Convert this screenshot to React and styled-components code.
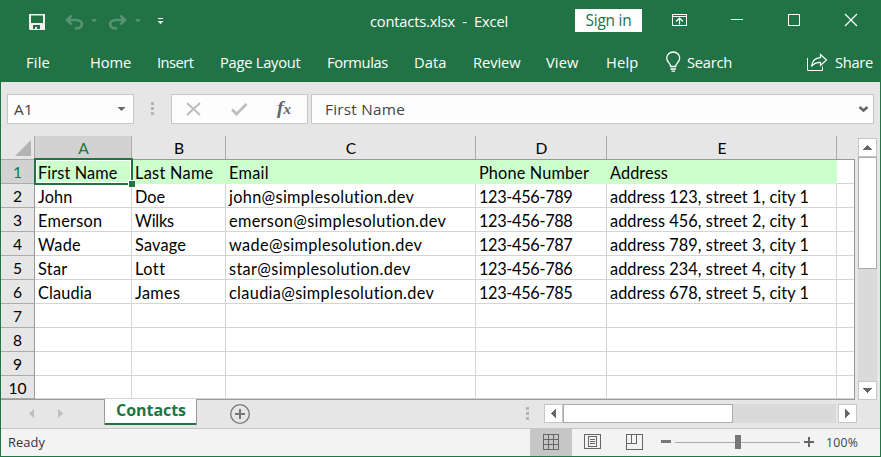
import React, { useLayoutEffect, useRef, useState } from "react";
import styled, { createGlobalStyle } from "styled-components";

const GREEN = "#217346";
const UI = '"Open Sans", "Noto Sans", sans-serif';
const CELL = 'Lato, "Open Sans", sans-serif';

const GlobalStyle = createGlobalStyle`
  * { box-sizing: border-box; }
  body { margin: 0; overflow: hidden; }
`;

/* Text tracked so that its advance equals a given width. */
const Tracked = styled.span`
  display: inline-block;
  white-space: pre;
`;

function FitText({ w, children }) {
  const ref = useRef(null);
  const [spacing, setSpacing] = useState(0);
  useLayoutEffect(() => {
    const natural = ref.current.getBoundingClientRect().width;
    setSpacing((w - natural) / children.length);
  }, [w, children]);
  return (
    <Tracked ref={ref} style={{ letterSpacing: `${spacing}px` }}>
      {children}
    </Tracked>
  );
}

const Window = styled.div`
  width: 881px;
  height: 457px;
  display: flex;
  flex-direction: column;
  background: #e6e6e6;
  border: 1px solid ${GREEN};
  border-top: 0;
  font-family: ${UI};
  font-size: 14.7px;
  overflow: hidden;
`;

const TitleBar = styled.header`
  display: flex;
  height: 41px;
  flex: none;
  background: ${GREEN};
  color: #fff;
`;

const QuickAccess = styled.div`
  width: 369px;
  flex: none;
`;

const TitleText = styled.div`
  width: 205px;
  flex: none;
  line-height: 42px;
  white-space: pre;
`;

const SignIn = styled.button`
  width: 67px;
  height: 23px;
  flex: none;
  margin: 9px 0 0;
  padding: 0;
  border: 0;
  background: #fff;
  color: ${GREEN};
  font: 15.4px/23px ${UI};
`;

const WindowControls = styled.div`
  flex: 1;
`;

const Drawing = styled.svg`
  display: block;
  flex: none;
`;

const Ribbon = styled.nav`
  display: flex;
  height: 41px;
  flex: none;
  padding-left: 25px;
  background: ${GREEN};
  color: #fff;
  line-height: 43px;
`;

const RibbonTab = styled.div`
  width: ${(p) => p.$w}px;
  flex: none;
  white-space: nowrap;
`;

const FormulaBar = styled.div`
  display: flex;
  height: 54px;
  flex: none;
  padding: 12px 0 0 6px;
  color: #444;
  font-size: 15.3px;
`;

const Field = styled.div`
  display: flex;
  justify-content: space-between;
  width: ${(p) => p.$w}px;
  height: 30px;
  flex: none;
  padding-left: ${(p) => p.$pad || 0}px;
  border: 1px solid #c6c6c6;
  background: #fdfdfd;
  line-height: 29px;
  margin-right: ${(p) => p.$gap || 0}px;
`;

const Workspace = styled.div`
  display: flex;
  height: 263px;
  flex: none;
`;

const Sheet = styled.div`
  position: relative;
  width: 854px;
  height: 264px;
  flex: none;
  border-right: 1px solid #999;
  border-bottom: 1px solid #999;
  background: #fff;
  font: 16.3px/24px ${CELL};
  color: #000;
`;

const SheetRow = styled.div`
  display: grid;
  grid-template-columns: 34px 97px 94px 250px 131px 230px 17px;
  grid-template-rows: 100%;
  height: ${(p) => p.$h || 24}px;
`;

const ColumnHead = styled.div`
  padding-left: 1px;
  border-right: 1px solid #ababab;
  border-bottom: 1px solid #999;
  background: ${(p) => (p.$active ? "#d2d2d2" : "#e6e6e6")};
  color: ${(p) => (p.$active ? GREEN : "#000")};
  text-align: center;
  font-size: 15.6px;
  line-height: 25px;
  &:last-child { border-right: 0; margin-right: -1px; }
`;

const Corner = styled.div`
  border-right: 1px solid #ababab;
  border-bottom: 1px solid #ababab;
  background: #e6e6e6;
`;

const RowHead = styled.div`
  border-right: 1px solid #999;
  border-bottom: 1px solid #ababab;
  background: ${(p) => (p.$active ? "#d2d2d2" : "#e6e6e6")};
  color: ${(p) => (p.$active ? GREEN : "#000")};
  text-align: center;
  font-size: 15.6px;
  line-height: 25px;
`;

const Cell = styled.div`
  overflow: hidden;
  padding-left: 3px;
  line-height: 25px;
  white-space: nowrap;
  border-right: 1px solid ${(p) => (p.$fill ? "#ccffcc" : "#d4d4d4")};
  border-bottom: 1px solid ${(p) => (p.$fill ? "#ccffcc" : "#d4d4d4")};
  background: ${(p) => (p.$fill ? "#ccffcc" : "#fff")};
  &:last-child { border-right: 0; }
  ${SheetRow}:last-of-type > & { border-bottom-width: 0; }
`;

const Selection = styled.div`
  position: absolute;
  left: 33px;
  top: 22px;
  width: 99px;
  height: 27px;
  border: 2px solid ${GREEN};
  box-shadow: inset 0 0 0 1px #fff;
  &::after {
    content: "";
    position: absolute;
    right: -4px;
    bottom: -4px;
    width: 6px;
    height: 6px;
    border: solid #fff;
    border-width: 1px 0 0 1px;
    background: ${GREEN};
  }
`;

const VScroll = styled.div`
  display: flex;
  flex-direction: column;
  width: 19px;
  height: 262px;
  margin: 2px 0 0 3px;
  flex: none;
  background: #dadada;
`;

const ScrollButton = styled.div`
  width: 19px;
  height: 19px;
  flex: none;
  border: 1px solid #c6c6c6;
  background: #fff;
`;

const Thumb = styled.div`
  width: ${(p) => p.$w}px;
  height: ${(p) => p.$h}px;
  flex: none;
  border: 1px solid #ababab;
  background: #fff;
`;

const Spacer = styled.div`
  flex: 1;
`;

const TabStrip = styled.div`
  display: flex;
  height: 30px;
  flex: none;
  border-bottom: 1px solid #c6c6c6;
`;

const SheetTab = styled.div`
  position: relative;
  width: 93px;
  height: 26px;
  flex: none;
  border: solid #999;
  border-width: 0 1px;
  background: #fff;
  box-shadow: inset 0 -2px 0 ${GREEN};
  color: ${GREEN};
  font-weight: 700;
  font-size: 16px;
  line-height: 23px;
  padding-left: 11px;
`;

const HScroll = styled.div`
  display: flex;
  width: 313px;
  height: 19px;
  margin-top: 5px;
  flex: none;
  background: #dadada;
`;

const HEnd = styled.div`
  flex: 1;
  border-right: 2px solid #e6e6e6;
`;

const StatusBar = styled.footer`
  display: flex;
  height: 27px;
  flex: none;
  background: #f3f3f3;
  color: #333;
  font-size: 12.8px;
  line-height: 27px;
`;

const StatusText = styled.div`
  width: 522px;
  flex: none;
  margin-left: 7px;
`;

const ZoomText = styled.div`
  margin-left: 4px;
  color: #444;
  font-size: 12.3px;
`;

const tabs = [
  ["File", 64, 24],
  ["Home", 67, 41],
  ["Insert", 63, 36.5],
  ["Page Layout", 107, 80.5],
  ["Formulas", 87, 61],
  ["Data", 59, 32.5],
  ["Review", 73, 47.5],
  ["View", 60, 32.5],
  ["Help", 59, 32.5],
];

const columns = ["A", "B", "C", "D", "E"];

const rows = [
  [["First Name", 79.5], ["Last Name", 78.5], ["Email", 40], ["Phone Number", 110], ["Address", 58]],
  [["John", 34.5], ["Doe", 30], ["john@simplesolution.dev", 185.5], ["123-456-789", 93.5], ["address 123, street 1, city 1", 199]],
  [["Emerson", 64.5], ["Wilks", 39], ["emerson@simplesolution.dev", 217.5], ["123-456-788", 93.5], ["address 456, street 2, city 1", 199]],
  [["Wade", 43], ["Savage", 51], ["wade@simplesolution.dev", 193.5], ["123-456-787", 93.5], ["address 789, street 3, city 1", 199]],
  [["Star", 29.5], ["Lott", 30], ["star@simplesolution.dev", 182], ["123-456-786", 93.5], ["address 234, street 4, city 1", 199]],
  [["Claudia", 54], ["James", 45.5], ["claudia@simplesolution.dev", 205.5], ["123-456-785", 93.5], ["address 678, street 5, city 1", 199]],
  [], [], [], [],
];

function QuickIcons() {
  return (
    <Drawing width="369" height="41" viewBox="1 0 369 41">
      <path fill="#f0f0f0" fillRule="evenodd" d="M29 14h16v16h-15l-1-1zM31 15.500v7.500h12v-7.500zM33 25v4h2v-2h2v2h3v-4z" />
      <g fill="none" stroke="#569373" strokeWidth="2.600">
        <path d="M67 20h9c8 0 8 8.500-1 8.500M71.500 15.500L67 20l4.500 4.500" />
        <path d="M125 20h-9c-8 0-8 8.500 1 8.500M120.500 15.500L125 20l-4.500 4.500" />
      </g>
      <path fill="#569373" d="M91 19h6l-3 3.500zM135 19h6l-3 3.500z" />
      <path fill="#fff" d="M158 18h5v1h-5zM157.500 21h6l-3 3z" />
    </Drawing>
  );
}

function ControlIcons() {
  return (
    <Drawing width="238" height="41" viewBox="642 0 238 41">
      <g fill="none" stroke="#fff" shapeRendering="crispEdges">
        <path d="M672.500 14.500h14v11h-14zM672 16.500h15M731 19.500h12M788.500 14.500h11v11h-11z" />
      </g>
      <g fill="none" stroke="#fff" strokeWidth="1.200">
        <path d="M679.500 24.500v-6M676 21.500l3.500-3.500 3.500 3.500M845 14l12 12M857 14l-12 12" />
      </g>
    </Drawing>
  );
}

const Glyph = ({ d }) => (
  <Drawing width="17" height="17" viewBox="0 0 17 17">
    <path d={d} fill="#666" shapeRendering="crispEdges" />
  </Drawing>
);

export default function App() {
  return (
    <Window>
      <GlobalStyle />
      <TitleBar>
        <QuickAccess><QuickIcons /></QuickAccess>
        <TitleText><FitText w={138}>{"contacts.xlsx  -  Excel"}</FitText></TitleText>
        <SignIn><FitText w={46}>Sign in</FitText></SignIn>
        <WindowControls><ControlIcons /></WindowControls>
      </TitleBar>

      <Ribbon>
        {tabs.map(([label, w, tw]) => (
          <RibbonTab key={label} $w={w}><FitText w={tw}>{label}</FitText></RibbonTab>
        ))}
        <Drawing width="22" height="41" viewBox="665 41 22 41">
          <g fill="none" stroke="#fff" strokeWidth="1.300">
            <path d="M670.700 66.500c0-3-4-4.500-4-8.500a6.500 6 0 0 1 13 0c0 4-4 5.500-4 8.500zM670.500 69h5.500M671.500 71.200h3.500" />
          </g>
        </Drawing>
        <RibbonTab $w={119}><FitText w={45}>Search</FitText></RibbonTab>
        <Drawing width="29" height="41" viewBox="806 41 29 41">
          <path d="M807.500 58v12.500h15v-4" fill="none" stroke="#fff" />
          <path d="M820.500 54.500l6 5.500-6 5.500v-3.200c-4.500 0-7 1.200-9 4.200.500-5 3.500-8.500 9-8.800z" fill="none" stroke="#fff" strokeWidth="1.200" />
        </Drawing>
        <RibbonTab $w={40}><FitText w={38}>Share</FitText></RibbonTab>
      </Ribbon>

      <FormulaBar>
        <Field $w={127} $pad={6}>
          <FitText w={19}>A1</FitText>
          <Drawing width="22" height="28" viewBox="111 95 22 28"><path d="M117.500 107h8l-4 4z" fill="#666" /></Drawing>
        </Field>
        <Drawing width="37" height="30" viewBox="134 94 37 30">
          <path d="M151 102h3v3h-3zM151 107h3v3h-3zM151 112h3v3h-3z" fill="#b5b5b5" />
        </Drawing>
        <Field $w={137} $gap={3}>
          <Drawing width="135" height="28" viewBox="172 95 135 28">
            <path d="M187 103l13 12M200 103l-13 12" stroke="#bdbdbd" strokeWidth="2" fill="none" />
            <path d="M232 109.500l4.500 4.500 10-10" stroke="#bdbdbd" strokeWidth="2.800" fill="none" />
            <text x="277" y="114" fontFamily="Liberation Serif, serif" fontStyle="italic" fontWeight="700" fontSize="19.500" fill="#666">f<tspan fontSize="15">x</tspan></text>
          </Drawing>
        </Field>
        <Field $w={563} $pad={13}>
          <FitText w={80}>First Name</FitText>
          <Drawing width="18" height="28" viewBox="855 95 18 28"><path d="M859.500 107l4 3.500 4-3.500" fill="none" stroke="#666" strokeWidth="2.500" /></Drawing>
        </Field>
      </FormulaBar>

      <Workspace>
        <Sheet>
          <SheetRow>
            <Corner>
              <Drawing width="33" height="23" viewBox="1 136 33 23"><path d="M31 140v16H15z" fill="#b3b3b3" /></Drawing>
            </Corner>
            {columns.map((c, i) => <ColumnHead key={c} $active={i === 0}>{c}</ColumnHead>)}
            <ColumnHead />
          </SheetRow>
          {rows.map((row, r) => (
            <SheetRow key={r} $h={r === 9 ? 23 : 24}>
              <RowHead $active={r === 0}>{r + 1}</RowHead>
              {columns.map((c, i) => (
                <Cell key={c} $fill={r === 0}>
                  {row[i] && <FitText w={row[i][1]}>{row[i][0]}</FitText>}
                </Cell>
              ))}
              <Cell />
            </SheetRow>
          ))}
          <Selection />
        </Sheet>
        <VScroll>
          <ScrollButton><Glyph d="M4 11h9l-4.500-5z" /></ScrollButton>
          <Thumb $w={19} $h={112} />
          <Spacer />
          <ScrollButton><Glyph d="M4 6h9l-4.500 5z" /></ScrollButton>
        </VScroll>
      </Workspace>

      <TabStrip>
        <Drawing width="103" height="29" viewBox="1 399 103 29">
          <path d="M34 409v9l-5-4.500zM58 409v9l5-4.500z" fill="#bdbdbd" />
        </Drawing>
        <SheetTab><FitText w={70}>Contacts</FitText></SheetTab>
        <Drawing width="347" height="29" viewBox="197 399 347 29">
          <circle cx="240" cy="414" r="9.300" fill="none" stroke="#777" strokeWidth="1.300" />
          <path d="M235 414h10M240 409v10" stroke="#777" strokeWidth="2" />
          <path d="M526 407h3v3h-3zM526 412h3v3h-3zM526 417h3v3h-3z" fill="#b5b5b5" />
        </Drawing>
        <HScroll>
          <ScrollButton><Glyph d="M11 4v9l-5-4.500z" /></ScrollButton>
          <Thumb $w={170} $h={19} />
          <HEnd />
          <ScrollButton><Glyph d="M6 4v9l5-4.500z" /></ScrollButton>
        </HScroll>
      </TabStrip>

      <StatusBar>
        <StatusText><FitText w={37}>Ready</FitText></StatusText>
        <Drawing width="292" height="27" viewBox="530 429 292 27">
          <path d="M530 429h42v27h-42z" fill="#c6c6c6" />
          <g fill="none" stroke="#666" shapeRendering="crispEdges">
            <path d="M543.500 434.500h15v15h-15zM548.500 434v16M553.500 434v16M543 439.500h16M543 444.500h16" />
            <path d="M584.500 434.500h16v14h-16zM588.500 436.500h8v10h-8zM590 439.500h5M590 441.500h5M590 443.500h5" />
            <path d="M626.500 434.500h16v15h-16zM631.500 434v9M636.500 434v9.500M626 443.500h11" />
          </g>
          <path d="M661 440h10v3h-10zM735 435h6v14h-6z" fill="#777" />
          <path d="M675 442.500h60M741 442.500h59" stroke="#ababab" />
          <path d="M804 442h10M809 437v10" stroke="#666" strokeWidth="2" />
        </Drawing>
        <ZoomText><FitText w={32}>100%</FitText></ZoomText>
      </StatusBar>
    </Window>
  );
}
